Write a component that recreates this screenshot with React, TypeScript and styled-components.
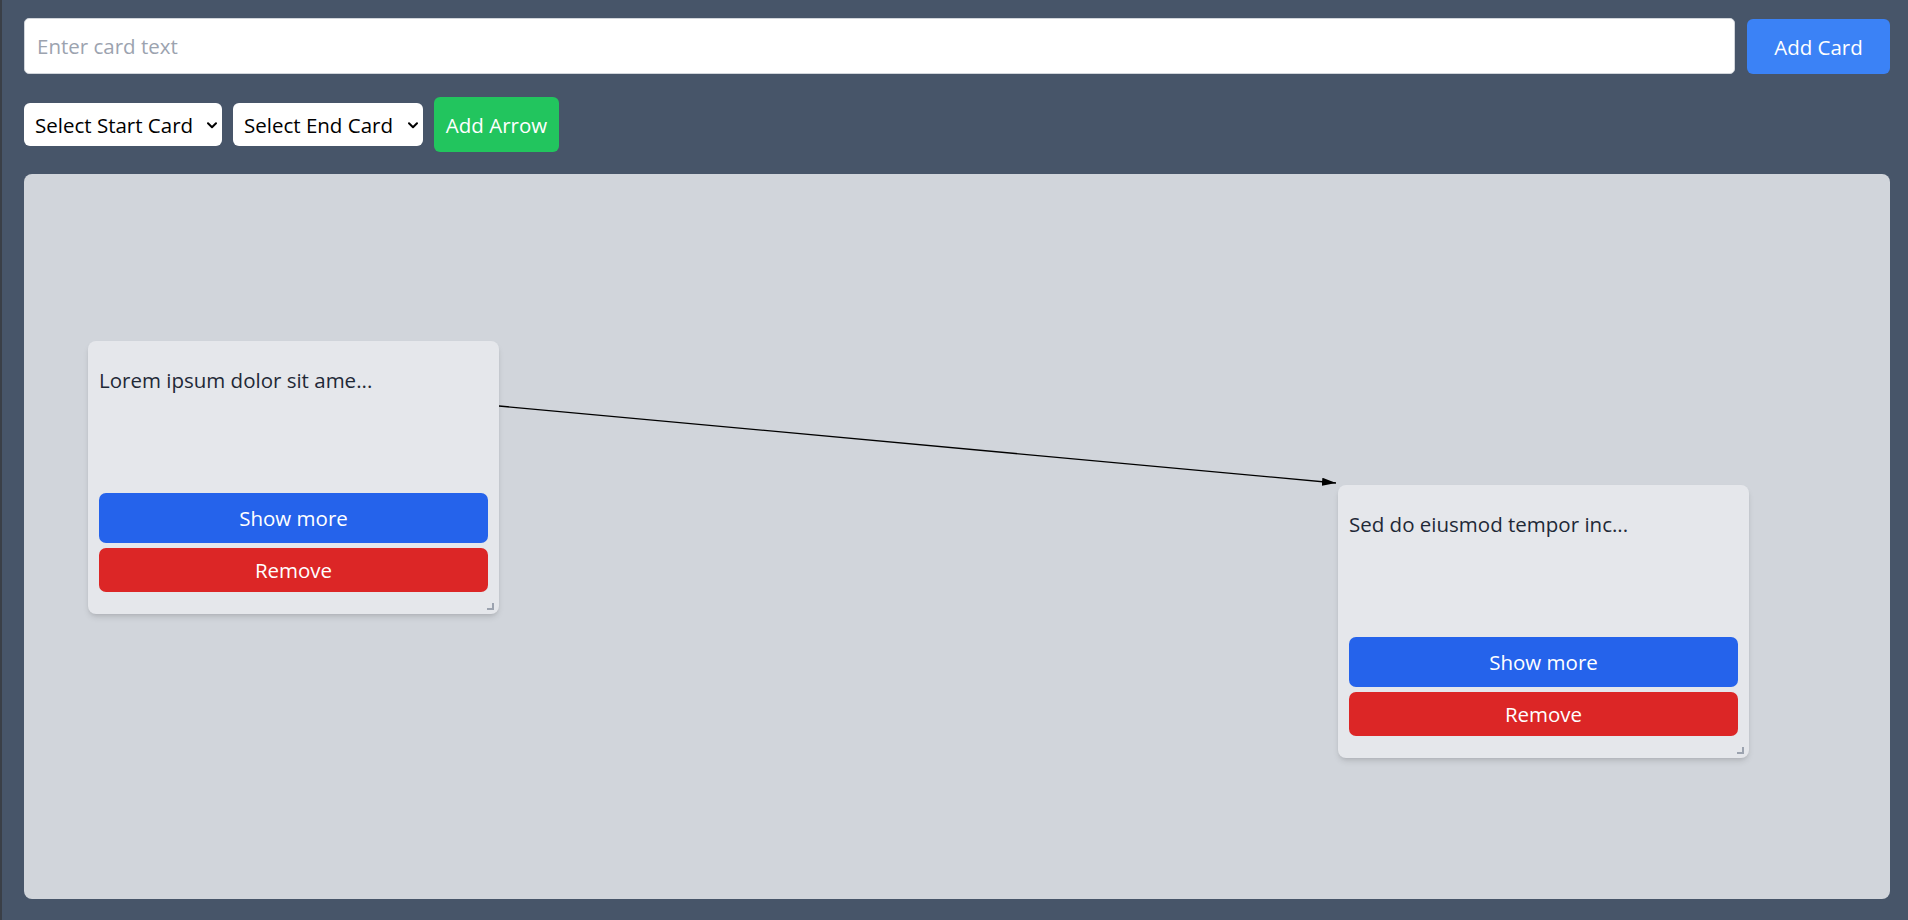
import React from "react";
import styled, { createGlobalStyle } from "styled-components";

const GlobalStyle = createGlobalStyle`
  html, body { margin: 0; padding: 0; }
  body { font-family: "Open Sans", "Noto Sans", sans-serif; }
  * { box-sizing: border-box; }
`;

const Page = styled.div`
  width: 1908px;
  height: 920px;
  background: #475569;
  border-left: 2px solid #3a3f47;
  padding: 18px 18px 21px 22px;
  display: flex;
  flex-direction: column;
  overflow: hidden;
`;

const TopRow = styled.div`
  display: flex;
  align-items: flex-end;
  gap: 12px;
  height: 56px;
`;

const TextInput = styled.input`
  flex: 1;
  height: 56px;
  border: 1px solid #d1d5db;
  border-radius: 5px;
  background: #ffffff;
  padding: 0 12px;
  font-family: inherit;
  font-size: 20.5px;
  color: #111827;
  outline: none;
  &::placeholder { color: #9ca3af; }
`;

const ActionButton = styled.button<{ $bg: string; $w: number; $h: number }>`
  width: ${(p) => p.$w}px;
  height: ${(p) => p.$h}px;
  background: ${(p) => p.$bg};
  color: #ffffff;
  border: none;
  border-radius: 6px;
  font-family: inherit;
  font-size: 20.5px;
  padding: 0;
  cursor: pointer;
  flex-shrink: 0;
`;

const SecondRow = styled.div`
  display: flex;
  align-items: center;
  gap: 11px;
  margin-top: 23px;
  height: 55px;
`;

const SelectWrap = styled.div<{ $w: number }>`
  position: relative;
  width: ${(p) => p.$w}px;
  height: 43px;
`;

const Select = styled.select`
  appearance: none;
  -webkit-appearance: none;
  width: 100%;
  height: 100%;
  border: none;
  border-radius: 6px;
  background: #ffffff;
  color: #000000;
  font-family: inherit;
  font-size: 20.5px;
  padding: 1px 0 0 11px;
  outline: none;
`;

const Chevron = styled.svg`
  position: absolute;
  right: 5px;
  top: 19px;
  width: 10px;
  height: 7px;
  pointer-events: none;
`;

const Canvas = styled.div`
  position: relative;
  margin-top: 22px;
  height: 725px;
  background: #d1d5db;
  border-radius: 8px;
`;

const Card = styled.div<{ $x: number; $y: number }>`
  position: absolute;
  left: ${(p) => p.$x}px;
  top: ${(p) => p.$y}px;
  width: 411px;
  height: 273px;
  background: #e5e7eb;
  border-radius: 8px;
  box-shadow: 0 4px 6px -1px rgba(0, 0, 0, 0.12), 0 2px 4px -2px rgba(0, 0, 0, 0.1);
  padding: 11px 11px 22px;
  display: flex;
  flex-direction: column;
`;

const CardText = styled.p`
  margin: 13px 0 0;
  flex: 1;
  font-size: 20.5px;
  line-height: 30px;
  color: #1f2937;
`;

const CardButton = styled.button<{ $bg: string; $h: number }>`
  width: 100%;
  height: ${(p) => p.$h}px;
  background: ${(p) => p.$bg};
  color: #ffffff;
  border: none;
  border-radius: 7px;
  font-family: inherit;
  font-size: 20.5px;
  padding: 0;
  cursor: pointer;
`;

const ButtonStack = styled.div`
  display: flex;
  flex-direction: column;
  gap: 5px;
`;

const ResizeHandle = styled.span`
  position: absolute;
  right: 5px;
  bottom: 4px;
  width: 7px;
  height: 7px;
  border-right: 2px solid #9ca3af;
  border-bottom: 2px solid #9ca3af;
`;

const ArrowLayer = styled.svg`
  position: absolute;
  inset: 0;
  width: 100%;
  height: 100%;
  pointer-events: none;
  overflow: visible;
`;

const cards = [
  { id: 1, x: 64, y: 167, text: "Lorem ipsum dolor sit ame..." },
  { id: 2, x: 1314, y: 311, text: "Sed do eiusmod tempor inc..." },
];

function ChevronIcon() {
  return (
    <Chevron viewBox="0 0 10 7">
      <path d="M1 1.2 L5 5.2 L9 1.2" fill="none" stroke="#000" strokeWidth="2" strokeLinecap="round" strokeLinejoin="round" />
    </Chevron>
  );
}

export default function App() {
  return (
    <>
      <GlobalStyle />
      <Page>
        <TopRow>
          <TextInput placeholder="Enter card text" />
          <ActionButton $bg="#3b82f6" $w={143} $h={55}>Add Card</ActionButton>
        </TopRow>
        <SecondRow>
          <SelectWrap $w={198}>
            <Select defaultValue="">
              <option value="">Select Start Card</option>
            </Select>
            <ChevronIcon />
          </SelectWrap>
          <SelectWrap $w={190}>
            <Select defaultValue="">
              <option value="">Select End Card</option>
            </Select>
            <ChevronIcon />
          </SelectWrap>
          <ActionButton $bg="#22c55e" $w={125} $h={55}>Add Arrow</ActionButton>
        </SecondRow>
        <Canvas>
          {cards.map((c) => (
            <Card key={c.id} $x={c.x} $y={c.y}>
              <CardText>{c.text}</CardText>
              <ButtonStack>
                <CardButton $bg="#2563eb" $h={50}>Show more</CardButton>
                <CardButton $bg="#dc2626" $h={44}>Remove</CardButton>
              </ButtonStack>
              <ResizeHandle />
            </Card>
          ))}
          <ArrowLayer>
            <defs>
              <marker id="arrowhead" markerWidth="14" markerHeight="8" refX="14" refY="4" orient="auto" markerUnits="userSpaceOnUse">
                <polygon points="0 0, 14 4, 0 8" fill="#000" />
              </marker>
            </defs>
            <line x1="475" y1="232" x2="1312" y2="309" stroke="#000" strokeWidth="1.3" markerEnd="url(#arrowhead)" />
          </ArrowLayer>
        </Canvas>
      </Page>
    </>
  );
}
